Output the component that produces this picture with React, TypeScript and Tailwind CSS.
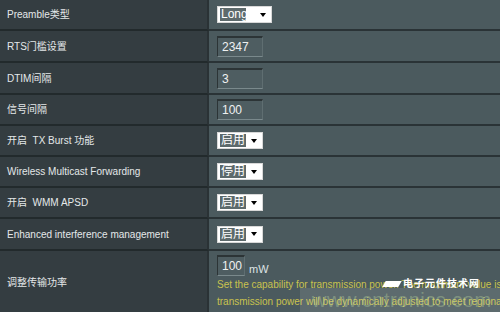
const font = { fontFamily: '"Liberation Sans", Arial, "Noto Sans CJK SC", sans-serif' };

type Row = { label: string; h: string; kind: "select" | "input"; value: string; wide?: boolean };

const rows: Row[] = [
  { label: "Preamble类型", h: "h-[31px]", kind: "select", value: "Long", wide: true },
  { label: "RTS门槛设置", h: "h-[32px]", kind: "input", value: "2347" },
  { label: "DTIM间隔", h: "h-[32px]", kind: "input", value: "3" },
  { label: "信号间隔", h: "h-[31px]", kind: "input", value: "100" },
  { label: "开启  TX Burst 功能", h: "h-[31px]", kind: "select", value: "启用" },
  { label: "Wireless Multicast Forwarding", h: "h-[31px]", kind: "select", value: "停用" },
  { label: "开启  WMM APSD", h: "h-[31px]", kind: "select", value: "启用" },
  { label: "Enhanced interference management", h: "h-[32px]", kind: "select", value: "启用" },
];

function Select({ value, wide }: { value: string; wide?: boolean }) {
  return (
    <div className={`flex items-center h-[17px] bg-white border border-[#d8d8d8] pl-[2px] ${wide ? "w-[55px]" : "w-[46px]"}`}>
      <span className={`bg-[#5d6a6c] text-white text-[12px] leading-[13px] px-[1px] ${wide ? "w-[26px]" : ""}`}>{value}</span>
      <span className="ml-auto mr-[5px] w-0 h-0 border-l-[3px] border-r-[3px] border-t-[4px] border-l-transparent border-r-transparent border-t-black" />
    </div>
  );
}

function Field({ value, w }: { value: string; w: string }) {
  return (
    <div className={`${w} h-[21px] bg-[#4e5d61] border-t-2 border-l border-t-[#2c3436] border-l-[#2c3436] border-b border-r border-b-[#7a898c] border-r-[#5f6e71] flex items-center pl-[4px] text-[12px] text-[#eef1f1]`}>
      {value}
    </div>
  );
}

export default function App() {
  return (
    <div style={font} className="w-[500px] h-[312px] overflow-hidden bg-[#4a595d] relative">
      <div className="grid grid-cols-[209px_1fr]">
        {rows.map((r) => (
          <div key={r.label} className="contents">
            <div className={`${r.h} bg-[#343d41] border-b-2 border-b-[#222a2c] border-r-2 border-r-[#2a3235] flex items-center pl-[7px] text-[10px] text-[#e4e8e9] whitespace-pre`}>
              {r.label}
            </div>
            <div className={`${r.h} bg-[#4b5a5e] border-b-2 border-b-[#2a3336] flex items-center pl-[8px]`}>
              {r.kind === "select" ? <Select value={r.value} wide={r.wide} /> : <Field value={r.value} w="w-[46px]" />}
            </div>
          </div>
        ))}
        <div className="h-[62px] bg-[#343d41] border-r-2 border-r-[#2a3235] flex items-center pl-[7px] text-[10px] text-[#e4e8e9]">
          调整传输功率
        </div>
        <div className="h-[62px] bg-[#4b5a5e] pl-[8px] pt-[4px] overflow-hidden">
          <div className="flex items-end gap-[4px]">
            <Field value="100" w="w-[28px]" />
            <span className="text-[11px] text-[#dfe4e5] leading-[13px]">mW</span>
          </div>
          <div className="text-[10px] leading-[17px] text-[#c9c24e] whitespace-nowrap">
            <div>Set the capability for transmission power. The maximum value is</div>
            <div>transmission power will be dynamically adjusted to meet regional</div>
          </div>
        </div>
      </div>
      <div className="absolute left-[300px] top-[288px] w-[200px] h-[24px] bg-white/10 flex items-center pl-[12px] text-[20px] text-[#b6d29c]/40 tracking-wide pointer-events-none">
        www.cntronics.com
      </div>
      <div className="absolute left-[384px] top-[276px] flex items-center gap-[3px] pointer-events-none">
        <span className="w-[16px] h-[6px] bg-white -skew-x-[30deg]" />
        <span className="text-[10px] font-bold text-white tracking-[1px]">电子元件技术网</span>
      </div>
    </div>
  );
}
